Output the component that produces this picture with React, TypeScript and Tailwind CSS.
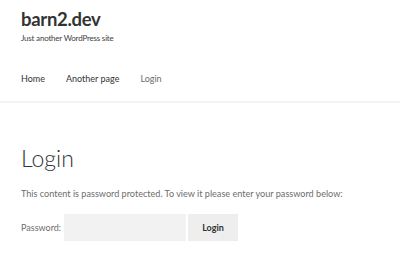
export default function App() {
  return (
    <div className="h-[268px] w-[400px] overflow-hidden bg-white text-[#6d6d6d] font-['Lato',sans-serif]">
      {/* Header */}
      <header className="border-b-2 border-[#f3f3f3] px-[21px]">
        <div className="pt-[7px]">
          <h1 className="text-[18.5px] font-bold leading-[24px] tracking-[-0.3px] text-[#333333]">barn2.dev</h1>
          <p className="mt-[2px] text-[8px] leading-[10px] tracking-[-0.2px] text-[#404040]">Just another WordPress site</p>
        </div>
        <nav className="flex gap-[21px] pb-[16px] pt-[30px] text-[9px] leading-[12px]">
          <a className="text-[#333333]">Home</a>
          <a className="text-[#333333]">Another page</a>
          <a className="text-[#6d6d6d]">Login</a>
        </nav>
      </header>

      {/* Main content */}
      <main className="px-[21px] pt-[40px]">
        <h2 className="text-[23px] font-light leading-[30px] text-[#333333]">Login</h2>
        <p className="mt-[15px] text-[9.1px] leading-[12px] text-[#6d6d6d]">
          This content is password protected. To view it please enter your password below:
        </p>
        <form className="mt-[14px] flex items-center text-[9px]">
          <label className="mr-[3px] text-[#6d6d6d]">Password:</label>
          <input type="password" className="h-[27px] w-[122px] bg-[#f2f2f2] outline-none" />
          <button type="button" className="ml-[2px] h-[27px] w-[50px] bg-[#eeeeee] font-bold text-[#333333]">
            Login
          </button>
        </form>
      </main>
    </div>
  )
}
